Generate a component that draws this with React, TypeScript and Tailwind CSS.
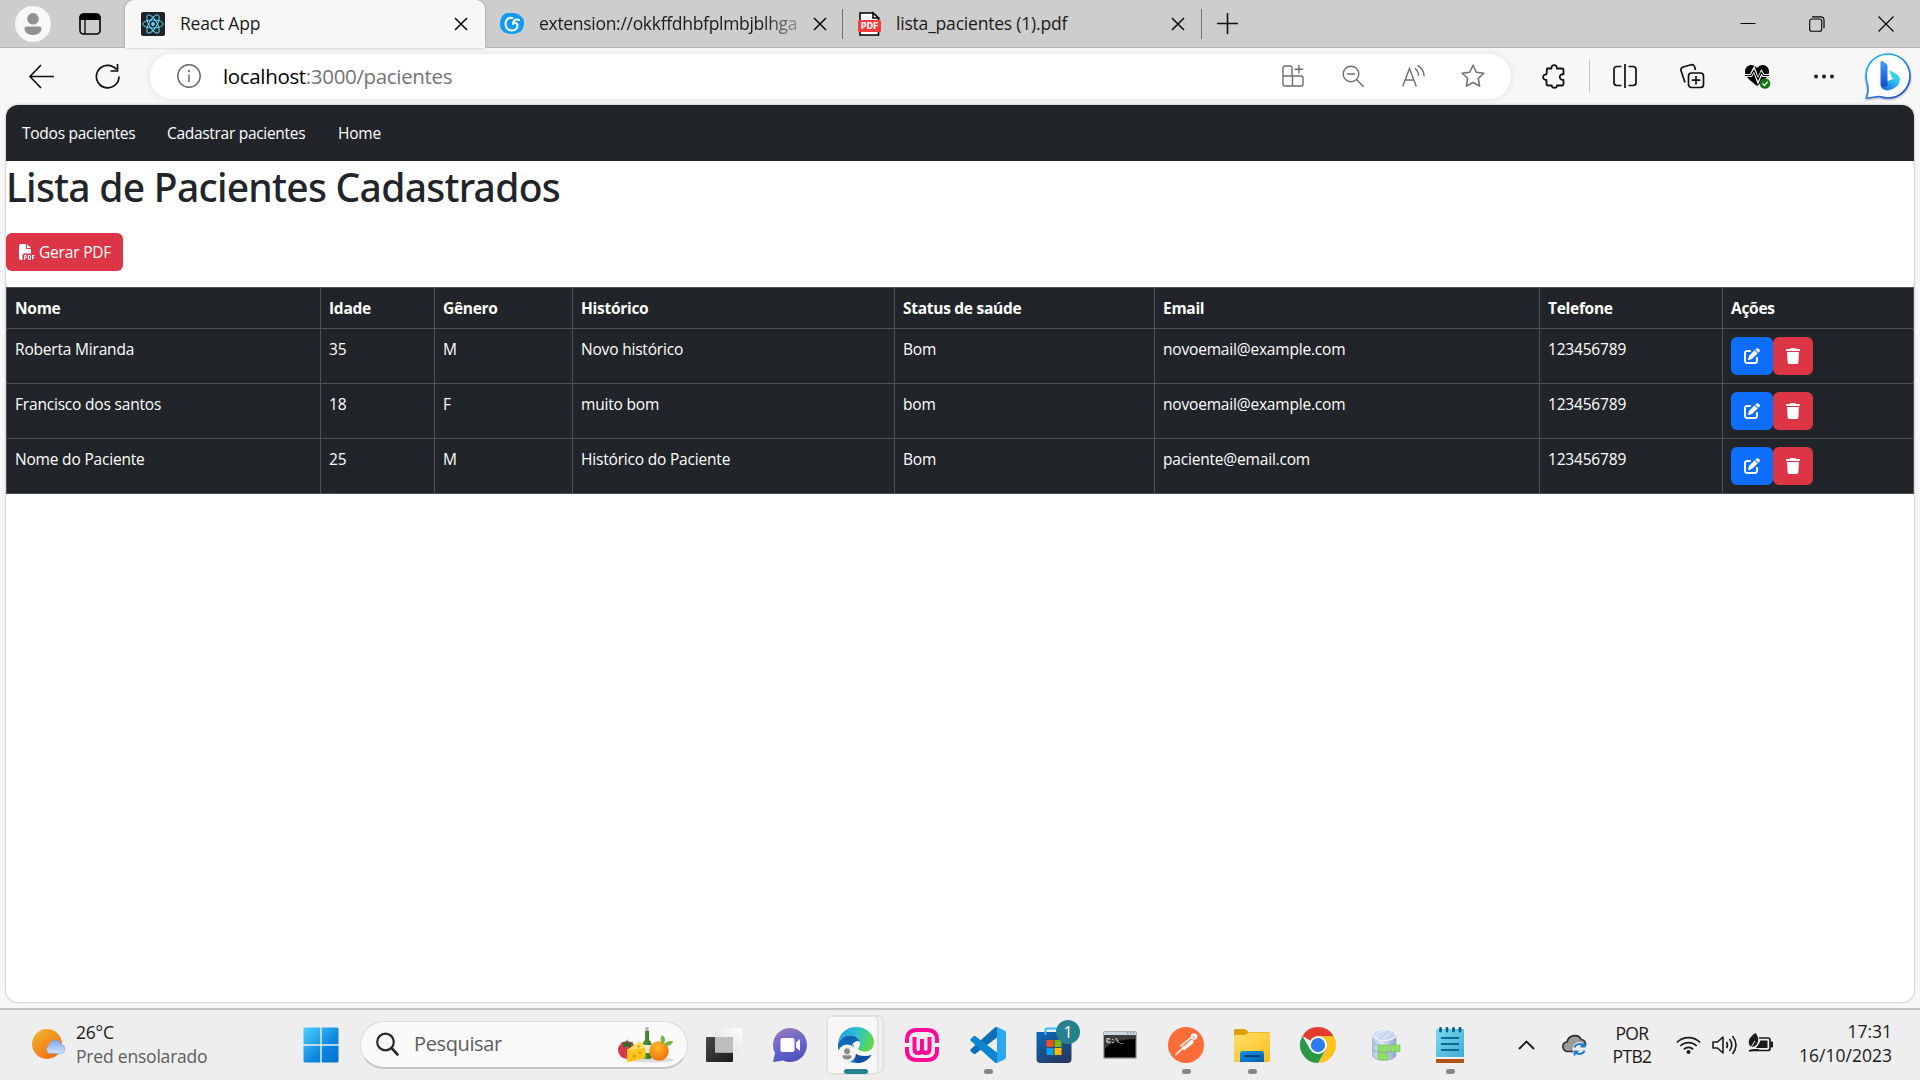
import type { ReactNode } from 'react';
import { FaFilePdf, FaPenToSquare, FaTrash } from 'react-icons/fa6';

type Patient = {
  nome: string;
  idade: number;
  genero: string;
  historico: string;
  status: string;
  email: string;
  telefone: string;
};

const patients: Patient[] = [
  { nome: 'Roberta Miranda', idade: 35, genero: 'M', historico: 'Novo histórico', status: 'Bom', email: 'novoemail@example.com', telefone: '123456789' },
  { nome: 'Francisco dos santos', idade: 18, genero: 'F', historico: 'muito bom', status: 'bom', email: 'novoemail@example.com', telefone: '123456789' },
  { nome: 'Nome do Paciente', idade: 25, genero: 'M', historico: 'Histórico do Paciente', status: 'Bom', email: 'paciente@email.com', telefone: '123456789' },
];

const headers = ['Nome', 'Idade', 'Gênero', 'Histórico', 'Status de saúde', 'Email', 'Telefone', 'Ações'];

function Svg({ s, h, box, children }: { s: number; h?: number; box?: string; children: ReactNode }) {
  return (
    <svg width={s} height={h ?? s} viewBox={box ?? `0 0 ${s} ${h ?? s}`} fill="none" className="block shrink-0 overflow-visible">
      {children}
    </svg>
  );
}

/* ---------- Tab strip ---------- */

function CloseX() {
  return (
    <Svg s={14}>
      <path d="M1 1l12 12M13 1L1 13" stroke="#111" strokeWidth="1.6" />
    </Svg>
  );
}

function ReactLogo() {
  return (
    <Svg s={24}>
      <rect width="24" height="24" rx="2" fill="#20232a" />
      <circle cx="12" cy="12" r="1.9" fill="#61dafb" />
      <g stroke="#61dafb" strokeWidth="1">
        <ellipse cx="12" cy="12" rx="10.3" ry="4" />
        <ellipse cx="12" cy="12" rx="10.3" ry="4" transform="rotate(60 12 12)" />
        <ellipse cx="12" cy="12" rx="10.3" ry="4" transform="rotate(120 12 12)" />
      </g>
    </Svg>
  );
}

function TabStrip() {
  return (
    <div className="flex h-12 items-stretch bg-[#cdcdcd] text-[17.5px] tracking-[-0.2px] text-[#1b1b1b]">
      <div className="flex w-[125px] items-center border-b border-[#b5b5b5] pl-[15px]">
        <Svg s={36}>
          <circle cx="18" cy="18" r="18" fill="#f8f8f8" />
          <circle cx="18" cy="12.8" r="5.8" fill="#919191" />
          <path d="M9.5 22.5q0-2 2-2h13q2 0 2 2c0 4-3.500 6.500-8.500 6.500s-8.500-2.500-8.500-6.500z" fill="#919191" />
        </Svg>
        <div className="ml-[28px]">
          <Svg s={22}>
            <rect x="1" y="1" width="20" height="20" rx="3.500" stroke="#000" strokeWidth="1.600" />
            <path d="M.5 7V4.500Q.5.500 4.500.500h13q4 0 4 4V7z" fill="#000" />
            <path d="M6 6v15" stroke="#000" strokeWidth="1.300" />
          </Svg>
        </div>
      </div>
      <div className="flex w-[360px] items-center rounded-t-[9px] bg-[#f7f7f7] pl-4 shadow-[0_0_3px_rgba(0,0,0,0.25)]">
        <ReactLogo />
        <span className="ml-[15px] flex-1 pb-px">React App</span>
        <div className="mr-[17px]"><CloseX /></div>
      </div>
      <div className="flex w-[357px] items-center border-b border-[#b5b5b5] pl-[15px]">
        <Svg s={24}>
          <path d="M7 1h6c5 0 11 4 11 9 0 7-3 12-12 12C5 22 0 19 0 12 0 6 3 2 7 1z" fill="#0c9cf7" />
          <path d="M12.500 6C8.500 5 5.500 8 5.500 12s3 6.500 6.500 6.500 6-2.500 5.500-5.500c-.3-2-2.500-2.500-4.500-2M19 8c-3.500-1.500-6 .5-6 4" stroke="#fff" strokeWidth="2.100" strokeLinecap="round" />
        </Svg>
        <span className="ml-[15px] w-[262px] whitespace-nowrap tracking-[-0.3px] [mask-image:linear-gradient(to_right,black_225px,rgba(0,0,0,0.25)_262px)]">
          extension://okkffdhbfplmbjblhga
        </span>
        <div className="ml-[12px]"><CloseX /></div>
      </div>
      <div className="flex w-[359px] items-center border-b border-[#b5b5b5]">
        <div className="h-[30px] w-px bg-[#747474]" />
        <div className="ml-[15px]">
          <Svg s={23} h={24}>
            <path d="M2 1h13l5.500 5v17H2z" fill="#fff" stroke="#000" strokeWidth="1.500" />
            <path d="M15 1v5h5.500z" fill="#fff" stroke="#000" strokeWidth="1.500" />
            <rect y="8" width="23" height="12" rx="1.500" fill="#fb3b3b" />
            <text x="11.500" y="17.200" textAnchor="middle" fontFamily="DejaVu Sans" fontSize="8.500" fontWeight="700" fill="#fff" textLength="17.500" lengthAdjust="spacingAndGlyphs">PDF</text>
          </Svg>
        </div>
        <span className="ml-[15px] flex-1">lista_pacientes (1).pdf</span>
        <div className="mr-[16px]"><CloseX /></div>
      </div>
      <div className="flex flex-1 items-center border-b border-[#b5b5b5]">
        <div className="h-[30px] w-px bg-[#747474]" />
        <div className="ml-[15px] flex-1">
          <Svg s={21}>
            <path d="M10.500 0v21M0 10.500h21" stroke="#111" strokeWidth="1.600" />
          </Svg>
        </div>
        <div className="flex">
          <div className="flex w-[69px] justify-center">
            <Svg s={16}><path d="M.5 7.500h15" stroke="#000" /></Svg>
          </div>
          <div className="flex w-[69px] justify-center">
            <Svg s={16}>
              <rect x=".7" y="3" width="12" height="12.300" rx="2" stroke="#000" strokeWidth="1.100" />
              <path d="M3 .8h9a3 3 0 0 1 3 3v8.500" stroke="#000" strokeWidth="1.200" />
            </Svg>
          </div>
          <div className="flex w-[69px] justify-center">
            <Svg s={16}><path d="M.5.5l15 15M15.500.5l-15 15" stroke="#000" strokeWidth="1.100" /></Svg>
          </div>
        </div>
      </div>
    </div>
  );
}

/* ---------- Address bar ---------- */

function Slot({ w, children }: { w: string; children: ReactNode }) {
  return <div className={`flex shrink-0 items-center justify-center ${w}`}>{children}</div>;
}

function BingLogo() {
  return (
    <Svg s={46}>
      <defs>
        <linearGradient id="bing-ring" x1="0" y1="0" x2="0.7" y2="1">
          <stop offset="0" stopColor="#1cc8f2" />
          <stop offset="1" stopColor="#2452d8" />
        </linearGradient>
        <linearGradient id="bing-stem" x1="0" y1="0" x2="0" y2="1">
          <stop offset="0" stopColor="#3fa0f8" />
          <stop offset="1" stopColor="#1748d0" />
        </linearGradient>
        <linearGradient id="bing-foot" x1="0" y1="1" x2="1" y2="0">
          <stop offset="0" stopColor="#1b5be0" />
          <stop offset="1" stopColor="#35dcf0" />
        </linearGradient>
      </defs>
      <path d="M23 1a22 22 0 1 1 0 44c-4 0-6.500-1.500-9-1.500-4 0-8 1.800-12.500 1.500C3 41 3.500 37 2.800 33 2 29.500 1 27 1 23A22 22 0 0 1 23 1z" fill="#fff" stroke="url(#bing-ring)" strokeWidth="1.700" className="drop-shadow-[0_1px_1px_rgba(0,0,0,0.3)]" />
      <path d="M24 17l8 4.500c3 2 3.800 5 2 8.200-.8-2-2.500-2.700-4.500-3.400l-2-.8z" fill="#2ed3ee" />
      <path d="M15.500 31l13-5.200c4-.6 7 2 5.500 5-1 2-3.500 3.500-6.500 5.300-5 3-12 1-12-5.100z" fill="url(#bing-foot)" />
      <path d="M15.500 9.500c0-1.300 1.300-1.800 2.500-1l3 2c1 .7 1.500 1.500 1.500 2.800V32c-1 3-6.500 3-7-1.500z" fill="url(#bing-stem)" />
    </Svg>
  );
}

function AddressBar() {
  return (
    <div className="flex h-[57px] items-center bg-[#f7f7f7] pb-px">
      <div className="flex w-[150px] shrink-0">
        <div className="pl-[29px]">
          <Svg s={25}><path d="M12 1L1 12.500l11 11.500M1 12.500h24" stroke="#111" strokeWidth="1.700" /></Svg>
        </div>
        <div className="pl-[41px]">
          <Svg s={25}>
            <path d="M21.500 5.500A11.300 11.300 0 1 0 24 12.500" stroke="#111" strokeWidth="1.700" />
            <path d="M22.500 0v7h-7" stroke="#111" strokeWidth="1.700" />
          </Svg>
        </div>
      </div>
      <div className="flex h-[45px] w-[1361px] shrink-0 items-center rounded-full bg-white shadow-[0_0_4px_3px_rgba(0,0,0,0.04)]">
        <div className="ml-[27px]">
          <Svg s={24}>
            <circle cx="12" cy="12" r="11.200" stroke="#666" strokeWidth="1.400" />
            <path d="M12 10.500v7.500" stroke="#666" strokeWidth="1.500" />
            <circle cx="12" cy="7.200" r="1.100" fill="#666" />
          </Svg>
        </div>
        <span className="ml-[22px] flex-1 text-[20.5px] tracking-[-0.34px] text-[#747474]">
          <span className="text-black">localhost</span>:3000/pacientes
        </span>
        <Slot w="w-[60px]">
          <Svg s={22}>
            <path d="M10 11V2.500Q10 1 8.500 1H3Q1 1 1 3v16q0 2 2 2h16q2 0 2-2v-6q0-2-2-2H1M10.500 11v10M17 0v8.500M12.700 4.200h8.600" stroke="#6f6f6f" strokeWidth="1.400" />
          </Svg>
        </Slot>
        <Slot w="w-[60px]">
          <Svg s={22}>
            <circle cx="9" cy="9" r="7.800" stroke="#6f6f6f" strokeWidth="1.400" />
            <path d="M5 9h8M14.700 14.700l7 7" stroke="#6f6f6f" strokeWidth="1.400" />
          </Svg>
        </Slot>
        <Slot w="w-[60px]">
          <Svg s={22}>
            <path d="M.7 21.500L7.500 3.500l6.800 18M3.300 15h8.500M13 3.200c2.200 1.800 3.400 4.400 3.600 7.500M15.500.5c4.200 2 6.500 5.800 6.700 11" stroke="#6f6f6f" strokeWidth="1.400" />
          </Svg>
        </Slot>
        <Slot w="w-[60px]">
          <Svg s={24}>
            <path d="M12 1.200l3.300 7 7.500 1-5.500 5.300 1.400 7.700-6.700-3.700-6.700 3.700 1.400-7.700L1.200 9.200l7.500-1z" stroke="#6f6f6f" strokeWidth="1.500" strokeLinejoin="round" />
          </Svg>
        </Slot>
        <div className="w-[8px]" />
      </div>
      <Slot w="w-[78px]">
        <div className="pl-[7px]">
          <Svg s={24}>
            <path d="M5 4.500h4.500c-.7-4.500 6-4.500 5.300 0H20q1.500 0 1.500 1.500v4.300c-5-.8-5 6.300 0 5.500V20q0 1.500-1.500 1.500h-5c.7 3-5.800 3-5.200 0H6q-1.500 0-1.500-1.500v-4c-4.500.3-4.500-6 0-5.700z" stroke="#111" strokeWidth="1.800" strokeLinejoin="round" />
          </Svg>
        </div>
      </Slot>
      <div className="h-8 w-px bg-[#c4c4c4]" />
      <Slot w="w-[70px]">
        <Svg s={24}>
          <path d="M8.500 2.500H4Q1 2.500 1 5.500v13q0 3 3 3h4.500M15.500 2.500H20q3 0 3 3v13q0 3-3 3h-4.500M12 0v24" stroke="#111" strokeWidth="1.700" />
        </Svg>
      </Slot>
      <Slot w="w-[64px]">
        <Svg s={24}>
          <rect x="8.500" y="9" width="15" height="14.500" rx="3" stroke="#111" strokeWidth="1.700" />
          <path d="M16 12v8.500M11.700 16.200h8.600M5 18.500L1 6.500Q.5 4 3 3l8-2.200q2.500-.6 3.500 1.700l1 3.500" stroke="#111" strokeWidth="1.700" />
        </Svg>
      </Slot>
      <Slot w="w-[67px]">
        <Svg s={25}>
          <path d="M12 22C4 16 0 12 0 7.500 0 1 8-1.500 12 4c4-5.500 12-3 12 3.500C24 12 20 16 12 22z" fill="#000" />
          <path d="M-.5 11.500H6l3-6 4 11 3.500-8 1.800 3h6.500" stroke="#f7f7f7" strokeWidth="3.200" />
          <path d="M0 11.500h6l3-5 4 9 3.300-7 2 3H24" stroke="#000" strokeWidth="1.200" />
          <circle cx="20" cy="19.500" r="5.300" fill="#107c10" />
          <path d="M17.500 19.500l2 2 3.200-3.700" stroke="#fff" strokeWidth="1.300" />
        </Svg>
      </Slot>
      <Slot w="w-[66px]">
        <Svg s={20} h={5}>
          <circle cx="2" cy="2.500" r="1.900" fill="#111" />
          <circle cx="10" cy="2.500" r="1.900" fill="#111" />
          <circle cx="18" cy="2.500" r="1.900" fill="#111" />
        </Svg>
      </Slot>
      <Slot w="w-[61px]"><BingLogo /></Slot>
    </div>
  );
}

/* ---------- Page ---------- */

const cell = 'border-b border-r border-[#4d5154] p-2 align-top';

function Page() {
  return (
    <div className="h-[903px] bg-[#f7f7f7] px-[6px]">
      <div className="h-[897px] overflow-hidden rounded-[12px] bg-white text-[15.5px] leading-6 tracking-[-0.19px] text-[#212529] shadow-[0_0_2px_1px_rgba(0,0,0,0.14)]">
        <nav className="flex h-14 items-center gap-8 bg-[#212529] pl-4 text-white">
          <a className="w-[113px] whitespace-nowrap tracking-[-0.26px]">Todos pacientes</a>
          <a className="w-[139px] whitespace-nowrap tracking-[-0.3px]">Cadastrar pacientes</a>
          <a>Home</a>
        </nav>
        <h1 className="h-12 font-['Noto_Sans'] text-[39px] leading-[51px] font-medium tracking-[-0.73px]">
          Lista de Pacientes Cadastrados
        </h1>
        <button className="mt-6 flex h-[38px] w-[117px] items-center rounded-[6px] bg-[#dc3545] pl-[13px] text-white">
          <FaFilePdf size={16} />
          <span className="ml-1 whitespace-nowrap">Gerar PDF</span>
        </button>
        <table className="mt-4 w-[1908px] table-fixed border-separate border-spacing-0 border-t border-l border-[#4d5154] bg-[#212529] text-white">
          <colgroup>
            <col className="w-[314px]" />
            <col className="w-[114px]" />
            <col className="w-[138px]" />
            <col className="w-[322px]" />
            <col className="w-[260px]" />
            <col className="w-[385px]" />
            <col className="w-[183px]" />
            <col className="w-[191px]" />
          </colgroup>
          <thead>
            <tr className="h-[41px] text-left tracking-[-0.28px]">
              {headers.map((h) => (
                <th key={h} className={`${cell} font-bold`}>{h}</th>
              ))}
            </tr>
          </thead>
          <tbody>
            {patients.map((p) => (
              <tr key={p.nome} className="h-[55px]">
                <td className={cell}>{p.nome}</td>
                <td className={cell}>{p.idade}</td>
                <td className={cell}>{p.genero}</td>
                <td className={cell}>{p.historico}</td>
                <td className={cell}>{p.status}</td>
                <td className={cell}>{p.email}</td>
                <td className={cell}>{p.telefone}</td>
                <td className={cell}>
                  <div className="flex">
                    <button className="flex h-[38px] w-[42px] items-center justify-center rounded-[6px] bg-[#0d6efd]"><FaPenToSquare size={16} /></button>
                    <button className="flex h-[38px] w-[40px] items-center justify-center rounded-[6px] bg-[#dc3545]"><FaTrash size={16} /></button>
                  </div>
                </td>
              </tr>
            ))}
          </tbody>
        </table>
      </div>
    </div>
  );
}

/* ---------- Taskbar icons ---------- */

function WeatherIcon() {
  return (
    <Svg s={34} h={40}>
      <defs>
        <linearGradient id="sun" x1="0.1" y1="0" x2="0.8" y2="1">
          <stop offset="0" stopColor="#f2b630" />
          <stop offset="1" stopColor="#f1690f" />
        </linearGradient>
        <linearGradient id="cloud" x1="0" y1="0" x2="0" y2="1">
          <stop offset="0" stopColor="#7fa9ee" />
          <stop offset="1" stopColor="#d3e2fb" />
        </linearGradient>
      </defs>
      <circle cx="15" cy="19" r="15" fill="url(#sun)" />
      <path d="M17 28.500a5 5 0 0 1 0-8.500 6.500 6.500 0 0 1 12.300-.7A4.700 4.700 0 0 1 29 28.500z" fill="url(#cloud)" stroke="#7e9fd9" strokeWidth=".6" />
    </Svg>
  );
}

function WindowsLogo() {
  return (
    <Svg s={36}>
      <defs>
        <linearGradient id="win" gradientUnits="userSpaceOnUse" x1="0" y1="0" x2="36" y2="36">
          <stop offset="0" stopColor="#50d3ff" />
          <stop offset="0.6" stopColor="#0c86de" />
          <stop offset="1" stopColor="#0272cf" />
        </linearGradient>
      </defs>
      <path d="M2 .5h15.300v16.800H.5V2Q.5.500 2 .500zM18.700.5H34q1.500 0 1.500 1.500v15.300H18.700zM.5 18.700h16.800v16.800H2q-1.500 0-1.500-1.500zM18.700 18.700h16.800V34q0 1.500-1.500 1.500H18.700z" fill="url(#win)" />
    </Svg>
  );
}

function FoodArt() {
  return (
    <Svg s={56} h={37}>
      <defs>
        <radialGradient id="orange" cx="0.4" cy="0.3" r="0.8">
          <stop offset="0" stopColor="#ffb72e" />
          <stop offset="1" stopColor="#ee6c05" />
        </radialGradient>
        <linearGradient id="bottle" x1="0" y1="0" x2="1" y2="0">
          <stop offset="0" stopColor="#58a03a" />
          <stop offset="1" stopColor="#2f7223" />
        </linearGradient>
      </defs>
      <ellipse cx="34" cy="34" rx="22" ry="2.500" fill="#dcdcdc" />
      <path d="M27.500 1h3v4h-3z" fill="#b4b4b4" />
      <path d="M27 5h4v9c2 2 2.500 3 2.500 5v12q0 2-2 2h-5q-2 0-2-2V19c0-2 .5-3 2.500-5z" fill="url(#bottle)" />
      <path d="M24.500 19h9v8h-9z" fill="#e8ebe4" />
      <circle cx="9" cy="24" r="9" fill="#d93a4b" />
      <path d="M3 16l5 1 1-4 1.500 4 5-1-3 3 1 4-4.500-3-4 2.500.5-4z" fill="#2c6d2e" />
      <path d="M9 24l12-8q6 2 6.500 7v9L9 36.500z" fill="#ffc51f" />
      <path d="M9 24l12-8q6 2 6.500 6z" fill="#ffe06a" />
      <circle cx="16" cy="30" r="1.700" fill="#e79a07" />
      <circle cx="22" cy="27" r="1.400" fill="#e79a07" />
      <circle cx="20.500" cy="20.500" r="1.200" fill="#e79a07" />
      <circle cx="41" cy="25" r="9.800" fill="url(#orange)" />
      <path d="M44 9c4 3 4 6 1 9-3-3-3-6-1-9zM46 19c2-4 5-4 9-4-1 4-4 6-9 4z" fill="#7db043" />
    </Svg>
  );
}

function TaskViewIcon() {
  return (
    <Svg s={36}>
      <defs>
        <linearGradient id="tv-dark" x1="0" y1="0" x2="1" y2="1">
          <stop offset="0" stopColor="#484848" />
          <stop offset="1" stopColor="#1b1b1b" />
        </linearGradient>
        <linearGradient id="tv-light" x1="1" y1="0" x2="0" y2="1">
          <stop offset="0" stopColor="#fff" />
          <stop offset="1" stopColor="#d9d9d9" />
        </linearGradient>
      </defs>
      <rect y="10" width="27" height="25" rx="1" fill="url(#tv-dark)" />
      <rect x="9" y="1" width="27" height="24.500" rx="1" fill="url(#tv-light)" />
      <rect x="9" y="10" width="18" height="15.500" fill="#bdbdbd" />
    </Svg>
  );
}

function ChatIcon() {
  return (
    <Svg s={34}>
      <defs>
        <linearGradient id="chat" x1="0.2" y1="0" x2="0.5" y2="1">
          <stop offset="0" stopColor="#9a76b6" />
          <stop offset="0.5" stopColor="#6767cc" />
          <stop offset="1" stopColor="#4f52c0" />
        </linearGradient>
      </defs>
      <path d="M17 0a17 17 0 1 1-7 32.500L1 34q-1 0-.8-1L2 25A17 17 0 0 1 17 0z" fill="url(#chat)" />
      <rect x="7.500" y="10" width="14" height="14" rx="2" fill="#fff" />
      <path d="M23 14.500l4-3.500v12l-4-3.500z" fill="#fff" />
    </Svg>
  );
}

function EdgeIcon() {
  return (
    <Svg s={36}>
      <defs>
        <linearGradient id="edge-top" x1="0" y1="0.3" x2="1" y2="0.5">
          <stop offset="0" stopColor="#1f9de0" />
          <stop offset="0.5" stopColor="#2cc0d4" />
          <stop offset="1" stopColor="#62dc3e" />
        </linearGradient>
        <linearGradient id="edge-left" x1="0" y1="0" x2="0" y2="1">
          <stop offset="0" stopColor="#0b62ad" />
          <stop offset="1" stopColor="#1684dc" />
        </linearGradient>
      </defs>
      <path d="M0 17C1 6 9 0 18 0c11 0 18 7.500 18 15 0 6-4.500 9.500-9.500 9.500-4 0-6.500-1.700-6.500-3 0-1 1.800-1.800 1.800-5 0-4-4-8-10-8C6 8.500 1.500 12 0 17z" fill="url(#edge-top)" />
      <path d="M0 17C2 11.500 6.500 8.500 12 8.500c5.500 0 9.500 3.500 9.700 6.500-6-2.500-9 3-8 9 1 6 4 10 9 11.500C11 38-1 30 0 17z" fill="url(#edge-left)" />
      <path d="M16 17c-3 8 3 14.500 17.500 11C30 33.500 25 36 19.500 36c-6-3-9-13-3.500-19z" fill="#10509c" />
      <path d="M17 15.500c2-2.500 5-1.500 4.700 1.500-.2 2.500-1.700 3.500-1.700 4.500 0 1.300 2.500 3 6.500 3 3 0 5.500-1 7.500-3l-.8 6C24 30.500 14 26 17 15.500z" fill="#f7f7f7" />
      <path d="M20.500 22c1 1.500 3 2.500 6 2.500 4 0 7.500-2 9-6-1 3-5 4.500-9 4-3-.3-5-1-6-.5z" fill="#5bd648" />
      <circle cx="9" cy="26.500" r="9" fill="#f3f3f3" />
      <circle cx="9" cy="24.300" r="3" fill="#8a8a8a" />
      <path d="M4.500 29.500q0-1.200 1.200-1.200h6.600q1.200 0 1.200 1.200c0 4-9 4-9 0z" fill="#8a8a8a" />
    </Svg>
  );
}

function WampIcon() {
  return (
    <Svg s={34}>
      <path d="M2 15v-3Q2 2 12 2h10q10 0 10 10v3M2 19v3q0 10 10 10h10q10 0 10-10v-3" stroke="#ff0a94" strokeWidth="4" />
      <path d="M9.500 9v12q0 4 3.750 4T17 21V11v10q0 4 3.750 4t3.750-4V9" stroke="#ff0a94" strokeWidth="4" />
    </Svg>
  );
}

function VsCodeIcon() {
  return (
    <Svg s={36}>
      <path d="M27 0v10.500L5.500 26.800q-1 .8-2 0L.7 24.300q-1-1 0-2L24.500.8Q25.700-.3 27 0z" fill="#0a70b8" />
      <path d="M27 36V25.500L5.500 9.200q-1-.8-2 0L.7 11.700q-1 1 0 2l23.800 21.500q1.200 1.100 2.500.8z" fill="#0f86d2" />
      <path d="M27 0l7.500 3.500Q36 4.200 36 6v24q0 1.800-1.500 2.500L27 36z" fill="#2aa7f2" />
    </Svg>
  );
}

function StoreIcon() {
  return (
    <div className="relative">
      <Svg s={36}>
        <defs>
          <linearGradient id="bag" x1="0" y1="0" x2="0.6" y2="1">
            <stop offset="0" stopColor="#0b6cc0" />
            <stop offset="1" stopColor="#273a63" />
          </linearGradient>
        </defs>
        <path d="M9.500 8V3q0-1.500 1.500-1.500h14q1.500 0 1.500 1.500v5" stroke="#35bdf5" strokeWidth="2" />
        <path d="M.5 5h35v27q0 4-4 4h-27q-4 0-4-4z" fill="url(#bag)" />
        <path d="M9.500 8V5M26.500 8V5" stroke="#35bdf5" strokeWidth="2" />
        <path d="M10.500 13h7v7h-7z" fill="#f25022" />
        <path d="M18.500 13h7v7h-7z" fill="#7fba00" />
        <path d="M10.500 21h7v7h-7z" fill="#00a4ef" />
        <path d="M18.500 21h7v7h-7z" fill="#ffb900" />
      </Svg>
      <div className="absolute -top-[7px] left-[20px] flex size-6 items-center justify-center rounded-full bg-[#26808f] text-[16px] leading-none text-white">1</div>
    </div>
  );
}

function CmdIcon() {
  return (
    <Svg s={34} h={28}>
      <rect x=".7" y=".7" width="32.600" height="26.600" rx="1" fill="#000" stroke="#a7adb5" strokeWidth="1.400" />
      <path d="M1 1h32v3H1z" fill="#cfd6de" />
      <path d="M24 2h1.500M27 2h1.500M30 2h1.500" stroke="#4d6da5" strokeWidth="1.200" />
      <path d="M1.500 4h31v4C18 8 7 12 1.500 18z" fill="#3b3b3b" />
      <text x="3" y="11.500" fontFamily="Liberation Mono" fontSize="7.500" fontWeight="700" fill="#eee">C:\_</text>
    </Svg>
  );
}

function PostmanIcon() {
  return (
    <Svg s={36}>
      <circle cx="18" cy="18" r="18" fill="#ff6c37" />
      <circle cx="26" cy="9.500" r="3.200" fill="#fff" />
      <path d="M23.500 12.500L14 20l2 3.500 8.500-6.500 1.500-3z" fill="#fff" />
      <path d="M15 21l-7 6.500M12.500 19l10-8" stroke="#fff" strokeWidth="1.600" strokeLinecap="round" />
      <path d="M24 9.500l3 1.500M16 19l4-3" stroke="#ff6c37" strokeWidth=".8" />
    </Svg>
  );
}

function FolderIcon() {
  return (
    <Svg s={36}>
      <defs>
        <linearGradient id="folder" x1="0" y1="0" x2="1" y2="1">
          <stop offset="0" stopColor="#ffe069" />
          <stop offset="1" stopColor="#fcbc20" />
        </linearGradient>
        <linearGradient id="tray" x1="0" y1="0" x2="1" y2="1">
          <stop offset="0" stopColor="#1193e0" />
          <stop offset="1" stopColor="#0560ae" />
        </linearGradient>
      </defs>
      <path d="M0 3q0-1 1-1h9q2 0 3 1.500L15 5h20q1 0 1 1v6H0z" fill="#dfa106" />
      <path d="M0 8h10q2 0 3-1.200T16 5.500h20V34q0 1-1 1H1q-1 0-1-1z" fill="url(#folder)" />
      <path d="M6 35v-8q0-3 3-3h18q3 0 3 3v8z" fill="url(#tray)" />
      <path d="M11 29h14" stroke="#07427b" strokeWidth="2" strokeLinecap="round" />
    </Svg>
  );
}

function ChromeIcon() {
  return (
    <Svg s={36} box="0 0 48 48">
      <path d="M24 24L3.200 12A24 24 0 0 1 44.800 12z" fill="#e33b2e" />
      <path d="M24 12h20.800A24 24 0 0 1 24 48l10.400-18z" fill="#fcc31e" />
      <path d="M13.600 30L3.200 12A24 24 0 0 0 24 48l10.400-18z" fill="#2a9a48" />
      <circle cx="24" cy="24" r="12" fill="#fff" />
      <circle cx="24" cy="24" r="9.500" fill="#2f7cf0" />
    </Svg>
  );
}

function DatabaseIcon() {
  return (
    <div className="pl-[3px]">
      <Svg s={28} h={32}>
        <defs>
          <linearGradient id="db" x1="0" y1="0" x2="1" y2="0">
            <stop offset="0" stopColor="#b5c6e4" />
            <stop offset="0.4" stopColor="#dfe7f5" />
            <stop offset="1" stopColor="#8ba3cf" />
          </linearGradient>
        </defs>
        <path d="M.5 6v20c0 7 23.500 7 23.500 0V6z" fill="url(#db)" stroke="#93a9d1" strokeWidth=".7" />
        <path d="M.5 13c2 5 21 5 23.500 0M.5 20c2 5 21 5 23.500 0" stroke="#8fa5cc" strokeWidth=".9" />
        <ellipse cx="12.250" cy="6" rx="11.700" ry="5.500" fill="#c9d6ec" stroke="#eff3fa" strokeWidth="1.200" />
        <path d="M3 6l6-3.500h4L5 9zM11 10l8-7" stroke="#edf2fa" strokeWidth="1" />
        <path d="M6 16h10v6.500H6zM18 16h10v6.500H18zM6 24.500h10V31H6z" fill="#92dc68" stroke="#78c44e" strokeWidth=".7" />
      </Svg>
    </div>
  );
}

function NotepadIcon() {
  return (
    <Svg s={28} h={36}>
      <defs>
        <linearGradient id="note" x1="0" y1="0" x2="1" y2="1">
          <stop offset="0" stopColor="#7cdaf3" />
          <stop offset="1" stopColor="#3fabd0" />
        </linearGradient>
      </defs>
      <path d="M0 30h28v5q0 1-1 1H1q-1 0-1-1z" fill="#b4520f" />
      <path d="M0 28h28v4H0z" fill="#f1f1f1" />
      <path d="M0 3q0-1 1-1h26q1 0 1 1v27H0z" fill="url(#note)" />
      <path d="M5 11h18M5 17h18M5 23h18" stroke="#0b6a93" strokeWidth="2" />
      <path d="M4.500 1.500v2.500M11 1.500v2.500M17.500 1.500v2.500M24 1.500v2.500" stroke="#0b5f85" strokeWidth="2.800" strokeLinecap="round" />
    </Svg>
  );
}

type TaskApp = { id: string; icon: ReactNode; open?: boolean; active?: boolean };

const apps: TaskApp[] = [
  { id: 'taskview', icon: <TaskViewIcon /> },
  { id: 'chat', icon: <ChatIcon /> },
  { id: 'edge', icon: <EdgeIcon />, active: true },
  { id: 'wamp', icon: <WampIcon /> },
  { id: 'vscode', icon: <VsCodeIcon />, open: true },
  { id: 'store', icon: <StoreIcon /> },
  { id: 'cmd', icon: <CmdIcon /> },
  { id: 'postman', icon: <PostmanIcon />, open: true },
  { id: 'folder', icon: <FolderIcon />, open: true },
  { id: 'chrome', icon: <ChromeIcon /> },
  { id: 'db', icon: <DatabaseIcon /> },
  { id: 'notepad', icon: <NotepadIcon />, open: true },
];

function Tray() {
  return (
    <div className="flex flex-1 items-center">
      <div className="ml-[35px]">
        <Svg s={17} h={10}><path d="M1 9l7.500-7.500L16 9" stroke="#1b1b1b" strokeWidth="1.900" /></Svg>
      </div>
      <div className="ml-[27px]">
        <Svg s={25} h={21}>
          <path d="M5 17.500C-1 16 0 8.500 5 8 7 0 17 0 19 5.500c4 .2 5 3.500 4.500 6.500L14 17.500z" fill="#9b9b9b" stroke="#2e2e2e" strokeWidth="1.700" />
          <circle cx="17.500" cy="15" r="7" fill="#eeeeee" />
          <path d="M12.500 13.500c1-4 7.500-4.500 9.500-1.500M22.500 8.500v4h-4M22.500 16.500c-1 4-7.500 4.500-9.500 1.500M12.500 21.500v-4h4" stroke="#1b79cf" strokeWidth="1.900" />
        </Svg>
      </div>
      <div className="ml-[25px] w-[40px] text-center leading-[23px] whitespace-nowrap tracking-[-0.6px]">
        <div>POR</div>
        <div>PTB2</div>
      </div>
      <div className="ml-[24px]">
        <Svg s={25} h={18}>
          <path d="M.8 6.500a16.500 16.500 0 0 1 23.400 0M4.300 10a11.600 11.600 0 0 1 16.400 0M7.800 13.300a6.700 6.700 0 0 1 9.400 0" stroke="#1b1b1b" strokeWidth="1.700" />
          <circle cx="12.500" cy="16" r="2" fill="#1b1b1b" />
        </Svg>
      </div>
      <div className="ml-[11px]">
        <Svg s={25} h={20}>
          <path d="M1 7h4.500L11 2v16l-5.500-5H1zM14.500 7q2 3 0 6M17.500 4q4.500 6 0 12M20.500 1q7 9 0 18" stroke="#1b1b1b" strokeWidth="1.600" strokeLinejoin="round" />
        </Svg>
      </div>
      <div className="ml-[11px] pb-[3px]">
        <Svg s={25} h={20}>
          <path d="M11 5h9q2 0 2 2v8.500q0 2-2 2H1" stroke="#1b1b1b" strokeWidth="1.700" />
          <path d="M23 9h1.500v5H23z" fill="#1b1b1b" stroke="#1b1b1b" />
          <path d="M12 7.500h7.500V15H8z" fill="#1b1b1b" />
          <path d="M7.500 0c3.500 3.500 4 10.500-1 13.500L3 14C-1 10 0 5 7.500 0z" fill="#1b1b1b" />
          <path d="M1 17.500L7 8M6 14.500q5-2 6-7" stroke="#eee" strokeWidth="1" />
          <path d="M1 18q5-1.500 10-1" stroke="#1b1b1b" strokeWidth="1.500" />
        </Svg>
      </div>
      <div className="mr-[28px] ml-auto pb-[3px] text-right leading-6">
        <div>17:31</div>
        <div>16/10/2023</div>
      </div>
    </div>
  );
}

function Taskbar() {
  return (
    <div className="flex h-[72px] items-center border-t-2 border-[#c2c2c2] bg-[#eeeeee] pb-px text-[17.5px] text-[#1b1b1b]">
      <div className="flex w-[303px] shrink-0 items-center pl-8">
        <WeatherIcon />
        <div className="ml-[10px] pb-[2px] leading-6 tracking-[-0.2px]">
          <div>26°C</div>
          <div className="text-[#5d5d5d]">Pred ensolarado</div>
        </div>
      </div>
      <WindowsLogo />
      <div className="ml-[21px] flex h-12 w-[328px] shrink-0 items-center rounded-full border border-b-2 border-[#dcdcdc] border-b-[#c4c4c4] bg-[#fafafa] pl-[15px]">
        <Svg s={23} h={24}>
          <circle cx="9.500" cy="10" r="8.300" stroke="#2b2b2b" strokeWidth="2.200" />
          <path d="M15.500 16l6 6.500" stroke="#2b2b2b" strokeWidth="2.600" strokeLinecap="round" />
        </Svg>
        <span className="ml-[15px] flex-1 text-[20px] tracking-[-0.38px] text-[#5d5d5d]">Pesquisar</span>
        <div className="mr-[13px]"><FoodArt /></div>
      </div>
      <div className="ml-[3px] flex h-[70px] shrink-0">
        {apps.map((a) => (
          <div key={a.id} className="relative flex w-[66px] items-center justify-center">
            {a.active && (
              <>
                <div className="absolute top-[5px] left-[13px] h-[59px] w-[48px] rounded-[6px] border-2 border-[#e2e2e2] bg-[#f3f3f3]" />
                <div className="absolute top-[5px] left-[3px] h-[60px] w-[53px] rounded-[6px] border-2 border-[#e2e2e2] bg-[#f7f7f7]" />
                <div className="absolute top-[59px] left-[21px] h-[5px] w-6 rounded-full bg-[#26808f]" />
              </>
            )}
            {a.open && <div className="absolute top-[59px] left-[29px] h-[5px] w-[9px] rounded-full bg-[#868686]" />}
            <div className="relative">{a.icon}</div>
          </div>
        ))}
      </div>
      <Tray />
    </div>
  );
}

export default function App() {
  return (
    <div className="h-[1080px] w-[1920px] overflow-hidden bg-[#f7f7f7] font-['Open_Sans','Noto_Sans',sans-serif]">
      <TabStrip />
      <AddressBar />
      <Page />
      <Taskbar />
    </div>
  );
}
